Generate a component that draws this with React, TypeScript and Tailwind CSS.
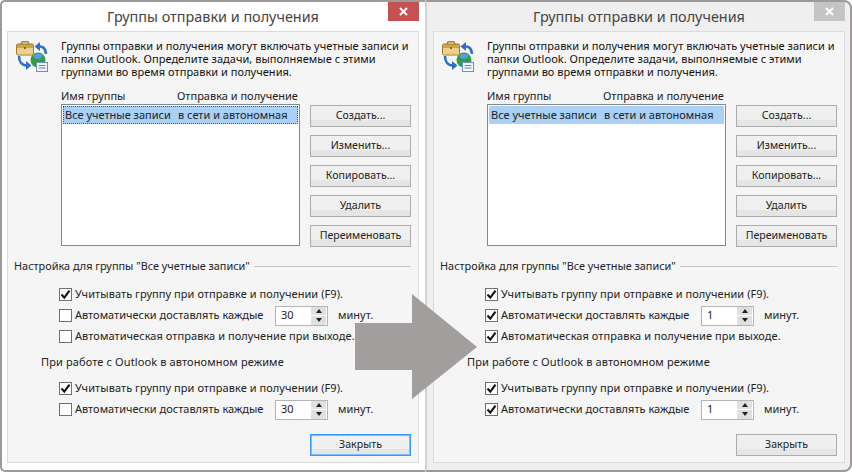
const FONT = "font-['Noto_Sans',sans-serif]";

function Icon() {
  return (
    <svg width="32" height="31" viewBox="0 0 32 31" className="shrink-0">
      <rect x="5.5" y="0.7" width="7" height="4" rx="1" fill="none" stroke="#a5812f" strokeWidth="1.4" />
      <rect x="0.5" y="3" width="17" height="11" rx="1.5" fill="#cfa548" stroke="#9a7a2c" />
      <rect x="1" y="7" width="16" height="6.5" fill="#ecd08a" />
      <rect x="8" y="6" width="2" height="2" fill="#8a6a22" />
      <path d="M23 5.5 C27 5 29.5 7.5 30 13" fill="none" stroke="#2f6fc8" strokeWidth="2.6" />
      <path d="M24 1 L18.5 5.5 L24 10 Z" fill="#2f6fc8" />
      <path d="M3 15 C3 21 6 24.5 11 24.5" fill="none" stroke="#2f6fc8" strokeWidth="2.6" />
      <path d="M10 20 L15.5 24.5 L10 29 Z" fill="#2f6fc8" />
      <circle cx="22" cy="19" r="7.5" fill="#2f9e44" />
      <path d="M17 14.5 C20 12 24 12 27 14.5 L24 18 L19 17.5 Z" fill="#5b9be6" />
      <rect x="20.5" y="21.5" width="11" height="9" fill="#f3f6fb" stroke="#6f8fc0" />
      <path d="M22.5 24.5 H29.5 M22.5 27 H29.5" stroke="#5c86c4" strokeWidth="1" />
    </svg>
  );
}

function Check({ on }: { on: boolean }) {
  return (
    <span className="w-[13px] h-[13px] shrink-0 border border-[#707070] bg-white flex items-center justify-center">
      {on && (
        <svg width="11" height="11" viewBox="0 0 11 11">
          <path d="M1.5 5.5 L4.3 8.6 L9.5 1.6" fill="none" stroke="#111" strokeWidth="2.1" />
        </svg>
      )}
    </span>
  );
}

function Btn({ label, focus }: { label: string; focus?: boolean }) {
  return (
    <div
      className={`w-[101px] h-[22px] border flex items-center justify-center text-[10.6px] text-[#222] bg-[linear-gradient(#f0f0f0_0%,#efefef_70%,#e5e5e5_70%,#e5e5e5_100%)] ${
        focus ? "border-[#3399ff] outline-1 -outline-offset-2 outline-[#7dbcff]" : "border-[#acacac]"
      }`}
    >
      {label}
    </div>
  );
}

function Spin({ value }: { value: string }) {
  return (
    <div className="w-[53px] h-[20px] border border-[#b4b4b4] bg-white flex items-center">
      <span className="flex-1 pl-[5px] text-[11px] text-[#222]">{value}</span>
      <div className="w-[15px] h-[18px] flex flex-col gap-px mr-[1px]">
        <div className="flex-1 bg-[#e0e0e0] flex items-center justify-center">
          <div className="w-0 h-0 border-x-[3px] border-x-transparent border-b-[4px] border-b-[#222]" />
        </div>
        <div className="flex-1 bg-[#e0e0e0] flex items-center justify-center">
          <div className="w-0 h-0 border-x-[3px] border-x-transparent border-t-[4px] border-t-[#222]" />
        </div>
      </div>
    </div>
  );
}

function Row({ on, label, spin }: { on: boolean; label: string; spin?: string }) {
  return (
    <div className="h-[21px] flex items-center gap-[3px]">
      <Check on={on} />
      <span className={`text-[11px] text-[#222] whitespace-nowrap w-[197px] ${spin ? "" : "tracking-[0.06px]"}`}>{label}</span>
      {spin && (
        <>
          <Spin value={spin} />
          <span className="ml-[7px] text-[11px] text-[#222]">минут.</span>
        </>
      )}
    </div>
  );
}

function Dialog({ active }: { active: boolean }) {
  return (
    <div
      className={`h-[472px] flex flex-col border-t-2 border-b-2 border-[#9c9a9a] pb-[7px] ${
        active
          ? "w-[425px] bg-white border-l-2 rounded-l-[5px] pl-[5px] pr-[6px]"
          : "w-[427px] bg-[#efefef] border-r-2 border-l-2 border-l-[#d0d0d0] rounded-r-[8px] pl-[6px] pr-[5px]"
      }`}
    >
      <div className="h-[29px] shrink-0 flex items-start relative">
        <div className="flex-1 text-center text-[14.4px] leading-[29px] text-[#444]">Группы отправки и получения</div>
        <div
          className={`absolute right-0 top-0 w-[31px] h-[19px] flex items-center justify-center ${
            active ? "bg-[#c75050]" : "bg-[#c4c4c4]"
          }`}
        >
          <svg width="9" height="9" viewBox="0 0 9 9">
            <path d="M1 1 L8 8 M8 1 L1 8" stroke="white" strokeWidth="2" />
          </svg>
        </div>
      </div>
      <div className="flex-1 border border-[#dcdcdc] bg-[#f5f5f5] flex flex-col pl-[6px] pr-[7px]">
        <div className="flex pt-[7px] pl-[2px]">
          <div className="pt-[2px] w-[45px] shrink-0">
            <Icon />
          </div>
          <p className="text-[11px] leading-[13px] text-[#111] whitespace-pre tracking-[0.03px]">
            {"Группы отправки и получения могут включать учетные записи и\nпапки Outlook. Определите задачи, выполняемые с этими\nгруппами во время отправки и получения."}
          </p>
        </div>
        <div className="flex mt-[11px] pl-[47px] text-[11px] leading-[13px] text-[#222]">
          <span className="w-[116px]">Имя группы</span>
          <span>Отправка и получение</span>
        </div>
        <div className="flex pl-[47px] mt-[2px]">
          <div className="w-[239px] h-[142px] border border-[#828790] bg-white p-px">
            <div
              className={`flex h-[18px] items-center bg-[#aad0f5] text-[11px] text-[#222] pl-[2px] ${
                active ? "outline-1 -outline-offset-1 outline-dotted outline-[#555]" : ""
              }`}
            >
              <span className="w-[113px]">Все учетные записи</span>
              <span>в сети и автономная</span>
            </div>
          </div>
          <div className="ml-[10px] mt-px flex flex-col gap-[8px]">
            <Btn label="Создать..." />
            <Btn label="Изменить..." />
            <Btn label="Копировать..." />
            <Btn label="Удалить" />
            <Btn label="Переименовать" />
          </div>
        </div>
        <div className="flex items-center gap-[4px] mt-[11px] text-[10.9px] text-[#222] h-[16px]">
          <span className="whitespace-nowrap">Настройка для группы "Все учетные записи"</span>
          <div className="flex-1 h-px bg-[#c8c8c8]" />
        </div>
        <div className="mt-[10px] ml-[45px] flex flex-col">
          <Row on label="Учитывать группу при отправке и получении (F9)." />
          <Row on={!active} label="Автоматически доставлять каждые" spin={active ? "30" : "1"} />
          <Row on={!active} label="Автоматическая отправка и получение при выходе." />
        </div>
        <div className="mt-[7px] pl-[27px] text-[11px] leading-[16px] text-[#222] tracking-[0.12px]">При работе с Outlook в автономном режиме</div>
        <div className="mt-[8px] ml-[45px] flex flex-col">
          <Row on label="Учитывать группу при отправке и получении (F9)." />
          <Row on={!active} label="Автоматически доставлять каждые" spin={active ? "30" : "1"} />
        </div>
        <div className="mt-auto mb-[6px] self-end">
          <Btn label="Закрыть" focus={active} />
        </div>
      </div>
    </div>
  );
}

export default function App() {
  return (
    <div className={`relative w-[852px] h-[472px] flex overflow-hidden bg-white ${FONT}`}>
      <Dialog active />
      <Dialog active={false} />
      <svg className="absolute left-[355px] top-[294px]" width="122" height="105" viewBox="0 0 122 105">
        <path d="M0 29 H57 V0 L122 53 L57 105 V76 H0 Z" fill="#a39e9e" />
      </svg>
    </div>
  );
}
